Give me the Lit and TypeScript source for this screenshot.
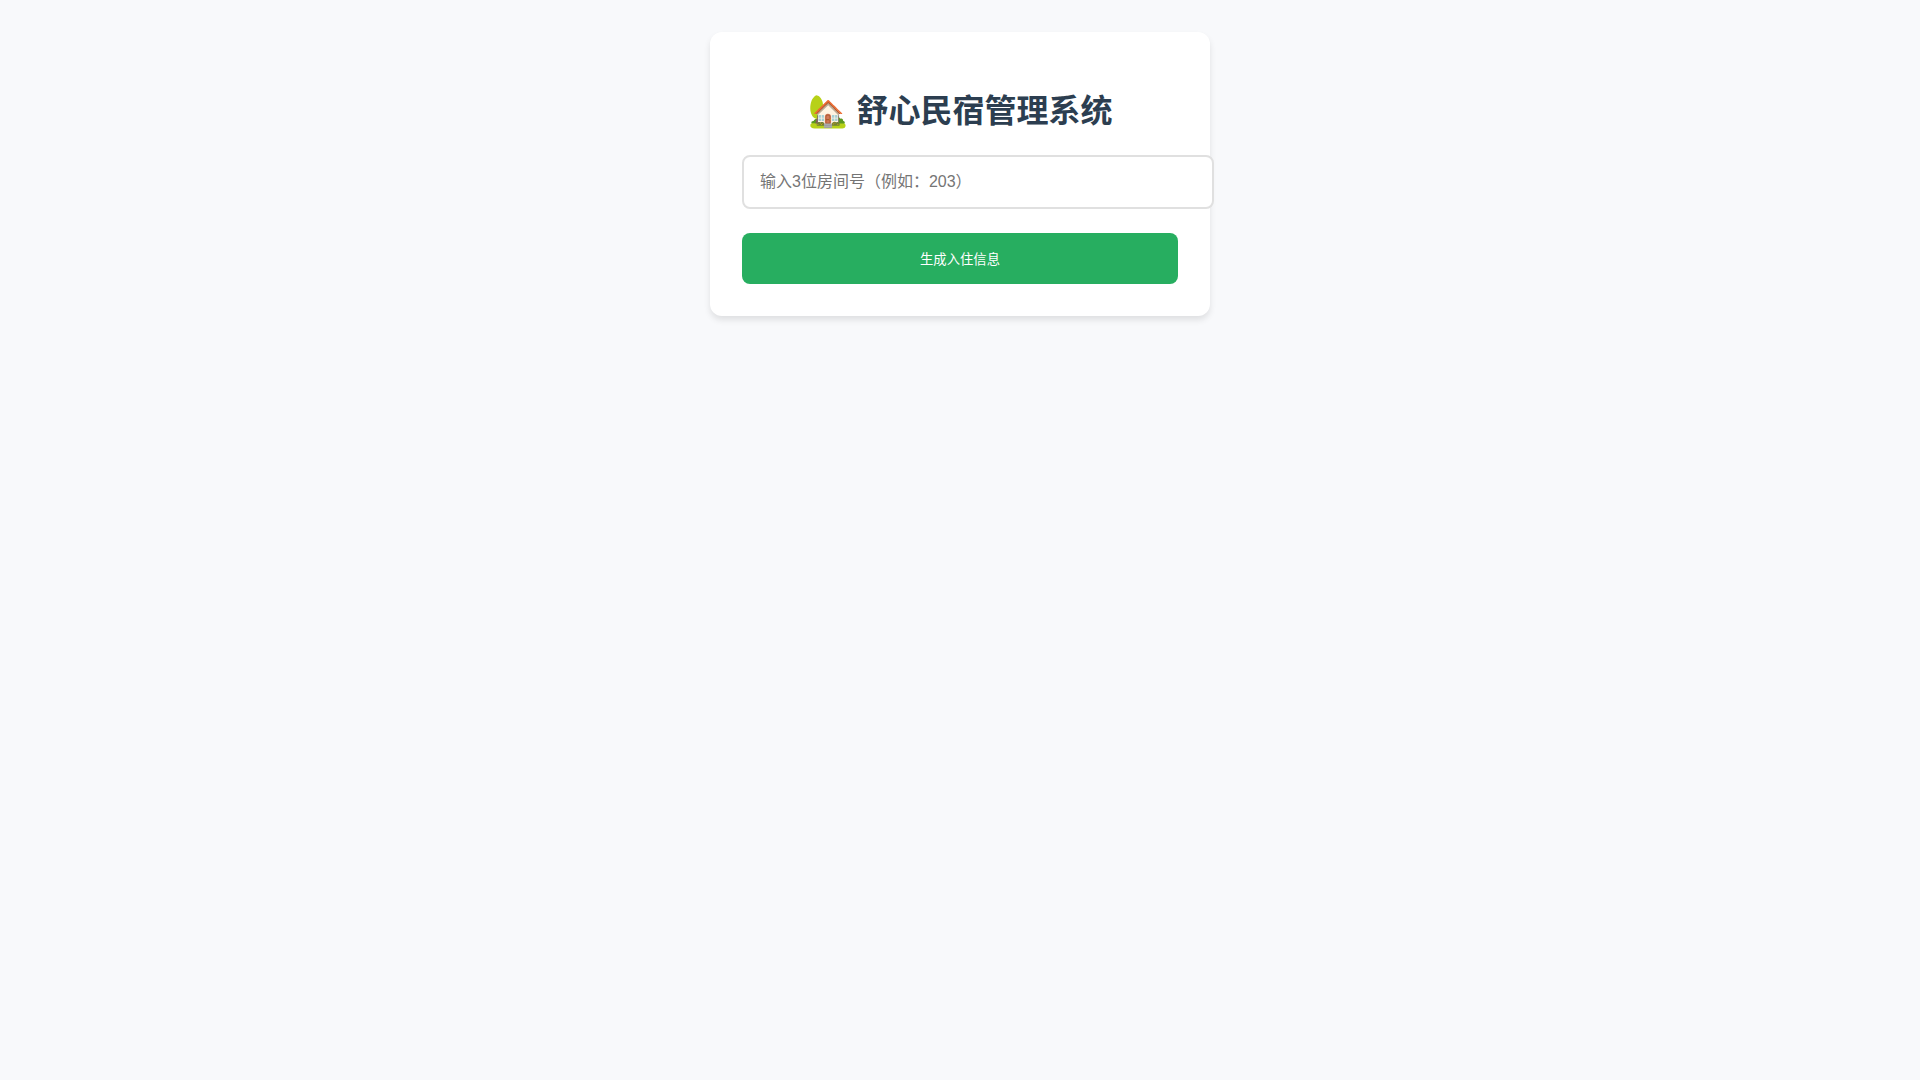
import { LitElement, html, css } from "lit";
import { customElement, state } from "lit/decorators.js";

@customElement("app-root")
export class AppRoot extends LitElement {
  static styles = css`
    :host {
      display: block;
      min-height: 100vh;
      box-sizing: border-box;
      padding: 32px 20px;
      background: #f8f9fb;
      font-family: "Liberation Sans", "Noto Sans CJK SC", sans-serif;
    }
    .card {
      max-width: 500px;
      box-sizing: border-box;
      margin: 0 auto;
      padding: 32px;
      background: #ffffff;
      border-radius: 12px;
      box-shadow: 0 4px 6px rgba(0, 0, 0, 0.1);
    }
    .title {
      margin: 21px 0 24px;
      color: #2c3e50;
      font-size: 32px;
      font-weight: bold;
      text-align: center;
    }
    .room {
      display: block;
      box-sizing: content-box;
      width: 100%;
      padding: 16px;
      border: 2px solid #e0e0e0;
      border-radius: 8px;
      background: #ffffff;
      font-family: inherit;
      font-size: 16px;
    }
    .submit {
      display: block;
      width: 100%;
      margin-top: 24px;
      padding: 16px;
      border: none;
      border-radius: 8px;
      background: #27ae60;
      color: #ffffff;
      font-family: inherit;
      cursor: pointer;
    }
  `;

  @state() private room = "";

  private onInput(e: Event) {
    this.room = (e.target as HTMLInputElement).value;
  }

  render() {
    return html`
      <main class="card" lang="zh-CN">
        <h1 class="title">🏡 舒心民宿管理系统</h1>
        <form @submit=${(e: Event) => e.preventDefault()}>
          <input
            class="room"
            type="text"
            maxlength="3"
            aria-label="输入3位房间号"
            placeholder="输入3位房间号（例如：203）"
            .value=${this.room}
            @input=${this.onInput}
          />
          <button class="submit" type="submit">生成入住信息</button>
        </form>
      </main>
    `;
  }
}
